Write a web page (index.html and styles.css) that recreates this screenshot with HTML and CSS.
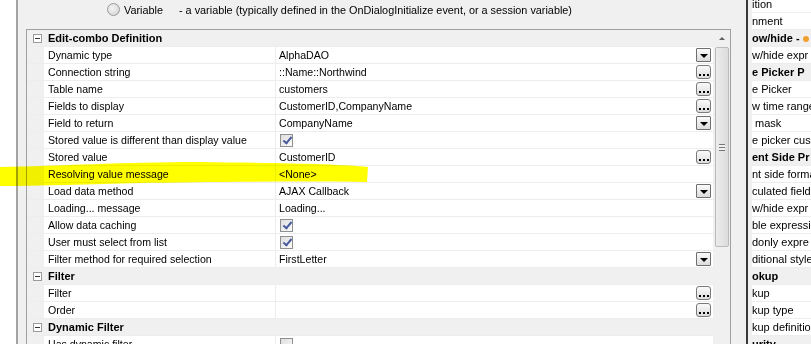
FILE: index.html
```html
<!DOCTYPE html>
<html lang="en">
  <head>
    <meta charset="UTF-8" />
    <meta name="viewport" content="width=device-width, initial-scale=1.0" />
    <title>Edit-combo properties</title>
    <link rel="stylesheet" href="styles.css">
  </head>
  <body>
    <div class="page">
      <div class="edge"></div>

      <div class="main">
        <div class="option">
          <span class="radio"></span>
          <span class="opt-name">Variable</span>
          <span class="opt-desc">- a variable (typically defined in the OnDialogInitialize event, or a session variable)</span>
        </div>

        <div class="grid">
          <div class="rows">
            <div class="cat"><span class="toggle"></span>Edit-combo Definition</div>
            <div class="row"><span class="name">Dynamic type</span><span class="value"><span class="text">AlphaDAO</span><span class="btn drop"></span></span></div>
            <div class="row"><span class="name">Connection string</span><span class="value"><span class="text">::Name::Northwind</span><span class="btn more"><i></i><i></i><i></i></span></span></div>
            <div class="row"><span class="name">Table name</span><span class="value"><span class="text">customers</span><span class="btn more"><i></i><i></i><i></i></span></span></div>
            <div class="row"><span class="name">Fields to display</span><span class="value"><span class="text">CustomerID,CompanyName</span><span class="btn more"><i></i><i></i><i></i></span></span></div>
            <div class="row"><span class="name">Field to return</span><span class="value"><span class="text">CompanyName</span><span class="btn drop"></span></span></div>
            <div class="row"><span class="name">Stored value is different than display value</span><span class="value"><span class="check on"></span></span></div>
            <div class="row"><span class="name">Stored value</span><span class="value"><span class="text">CustomerID</span><span class="btn more"><i></i><i></i><i></i></span></span></div>
            <div class="row"><span class="name">Resolving value message</span><span class="value"><span class="text">&lt;None&gt;</span></span></div>
            <div class="row"><span class="name">Load data method</span><span class="value"><span class="text">AJAX Callback</span><span class="btn drop"></span></span></div>
            <div class="row"><span class="name">Loading... message</span><span class="value"><span class="text">Loading...</span></span></div>
            <div class="row"><span class="name">Allow data caching</span><span class="value"><span class="check on"></span></span></div>
            <div class="row"><span class="name">User must select from list</span><span class="value"><span class="check on"></span></span></div>
            <div class="row"><span class="name">Filter method for required selection</span><span class="value"><span class="text">FirstLetter</span><span class="btn drop"></span></span></div>
            <div class="cat"><span class="toggle"></span>Filter</div>
            <div class="row"><span class="name">Filter</span><span class="value"><span class="text"></span><span class="btn more"><i></i><i></i><i></i></span></span></div>
            <div class="row"><span class="name">Order</span><span class="value"><span class="text"></span><span class="btn more"><i></i><i></i><i></i></span></span></div>
            <div class="cat"><span class="toggle"></span>Dynamic Filter</div>
            <div class="row"><span class="name">Has dynamic filter</span><span class="value"><span class="check"></span></span></div>
          </div>

          <div class="scroll">
            <div class="arrow"></div>
            <div class="thumb"><span class="grip"></span></div>
          </div>
        </div>
      </div>

      <div class="splitter"></div>

      <div class="side">
        <div class="srow">ition</div>
        <div class="srow">nment</div>
        <div class="srow bold">ow/hide - <span class="dot"></span></div>
        <div class="srow">w/hide expr</div>
        <div class="srow bold">e Picker P</div>
        <div class="srow">e Picker</div>
        <div class="srow">w time range</div>
        <div class="srow">&nbsp;mask</div>
        <div class="srow">e picker cus</div>
        <div class="srow bold">ent Side Pr</div>
        <div class="srow">nt side forma</div>
        <div class="srow">culated field</div>
        <div class="srow">w/hide expr</div>
        <div class="srow">ble expressi</div>
        <div class="srow">donly expre</div>
        <div class="srow">ditional style</div>
        <div class="srow bold">okup</div>
        <div class="srow">kup</div>
        <div class="srow">kup type</div>
        <div class="srow">kup definitio</div>
        <div class="srow bold">urity</div>
      </div>

      <svg class="marker" width="811" height="344" viewBox="0 0 811 344">
        <path d="M0,167 C60,166 120,162 200,162 C280,163 340,164 368,167 L367,182 C300,181 200,182 140,183 C90,184 40,186 0,186 Z" />
      </svg>
    </div>
  </body>
</html>
```

FILE: styles.css
```css
body {
  margin: 0;
  font-family: "Liberation Sans", Arial, sans-serif;
  font-size: 10.6px;
  color: black;
}

.page {
  position: relative;
  display: flex;
  width: 811px;
  height: 344px;
  overflow: hidden;
  background-color: #f0f0f0;
}

.edge {
  width: 16px;
  background-color: white;
  border-right: 2px solid #a3a3a3;
}

.main {
  width: 728px;
}

.option {
  display: flex;
  align-items: center;
  height: 19px;
  margin-bottom: 10px;
  padding-left: 89px;
  font-size: 10.85px;
}

.radio {
  width: 11px;
  height: 11px;
  border: 1px solid #9a9a9a;
  border-radius: 50%;
  background: radial-gradient(circle at 40% 40%, #f4f4f4, #cfcfcf);
}

.opt-name {
  width: 55px;
  margin-left: 4px;
}

.grid {
  display: flex;
  width: 703px;
  height: 320px;
  margin-left: 8px;
  border: 1px solid #a0a0a0;
  border-bottom: none;
  background-color: white;
}

.rows {
  width: 686px;
}

.cat,
.row {
  display: flex;
  align-items: center;
  height: 16px;
  border-bottom: 1px solid #ededed;
}

.cat {
  background-color: #f0f0f0;
  font-weight: bold;
  font-size: 11px;
}

.toggle {
  position: relative;
  width: 7px;
  height: 7px;
  margin: 0 6px 0 6px;
  border: 1px solid #9b9b9b;
  background-color: white;
}

.toggle::after {
  content: "";
  position: absolute;
  left: 1px;
  top: 3px;
  width: 5px;
  height: 1px;
  background-color: #333;
}

.row {
  padding-left: 17px;
  background-color: #f0f0f0;
}

.name {
  display: flex;
  align-items: center;
  width: 227px;
  height: 16px;
  padding-left: 4px;
  background-color: white;
  white-space: nowrap;
}

.value {
  display: flex;
  align-items: center;
  width: 434px;
  height: 16px;
  padding-left: 3px;
  border-left: 1px solid #ededed;
  background-color: white;
}

.text {
  flex: 1;
}

.btn {
  box-sizing: border-box;
  display: flex;
  justify-content: center;
  width: 15px;
  height: 14px;
  margin-right: 2px;
  border: 1px solid #6f6f6f;
  background: linear-gradient(#fafafa, #dcdcdc);
}

.drop {
  align-items: center;
  border-radius: 1px;
}

.drop::after {
  content: "";
  border-left: 4px solid transparent;
  border-right: 4px solid transparent;
  border-top: 4px solid black;
  margin-top: 1px;
}

.more {
  align-items: flex-end;
  gap: 2px;
  padding-bottom: 2px;
  border-radius: 3px;
  border-color: #7a7a7a;
}

.more i {
  width: 2px;
  height: 2px;
  background-color: black;
}

.check {
  position: relative;
  box-sizing: border-box;
  width: 13px;
  height: 13px;
  margin-left: 1px;
  border: 1px solid #8e8f8f;
  background: linear-gradient(135deg, #dedede, #fbfbfb);
}

.check.on::after {
  content: "";
  position: absolute;
  left: 4px;
  top: 0px;
  width: 3px;
  height: 7px;
  border-right: 2px solid #4a5c9c;
  border-bottom: 2px solid #4a5c9c;
  transform: rotate(40deg);
}

.scroll {
  width: 17px;
  background-color: #f0f0f0;
}

.arrow {
  display: flex;
  justify-content: center;
  align-items: center;
  height: 17px;
}

.arrow::after {
  content: "";
  border-left: 3px solid transparent;
  border-right: 3px solid transparent;
  border-bottom: 3px solid #606060;
}

.thumb {
  display: flex;
  justify-content: center;
  align-items: center;
  height: 198px;
  margin: 0 1px 0 2px;
  border: 1px solid #bababa;
  border-radius: 2px;
  background: linear-gradient(90deg, #ececec, #dcdcdc);
}

.grip {
  width: 6px;
  height: 5px;
  border-top: 1px solid #777;
  border-bottom: 1px solid #777;
  background: linear-gradient(#f0f0f0 2px, #777 2px, #777 3px, #f0f0f0 3px);
}

.splitter {
  width: 2px;
  background-color: #3a3a3a;
}

.side {
  width: 63px;
  margin-top: -4px;
  background-color: white;
  font-size: 11px;
}

.srow {
  height: 16px;
  line-height: 16px;
  border-bottom: 1px solid #ededed;
  border-left: 4px solid #f0f0f0;
  white-space: nowrap;
  overflow: hidden;
}

.srow.bold {
  font-weight: bold;
  background-color: #f0f0f0;
}

.dot {
  display: inline-block;
  width: 6px;
  height: 6px;
  border-radius: 50%;
  background-color: #f0a030;
}

.marker {
  position: absolute;
  left: 0;
  top: 0;
  pointer-events: none;
  mix-blend-mode: multiply;
}

.marker path {
  fill: #ffff00;
}
```
